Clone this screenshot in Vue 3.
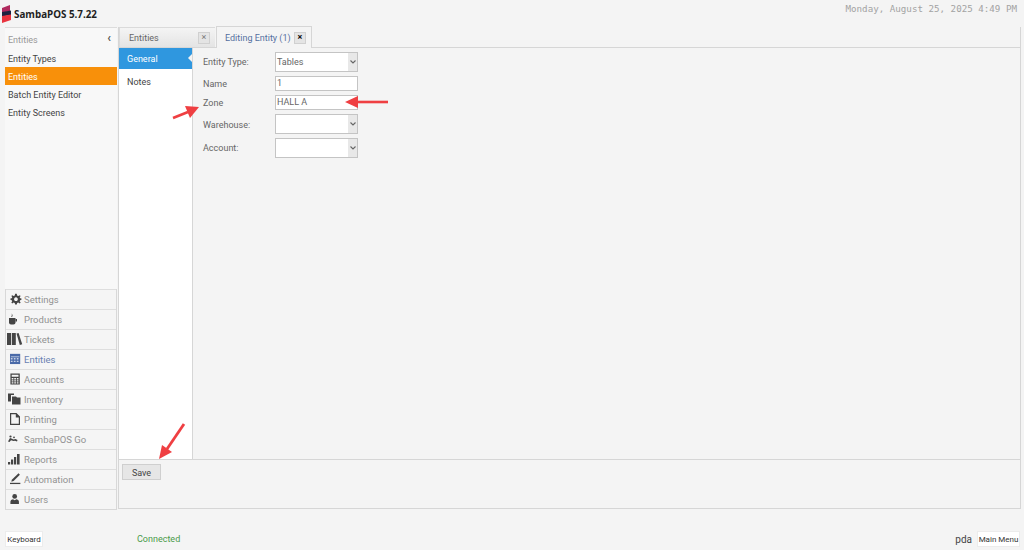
<script setup>
const navItems = [
  { label: 'Settings', icon: 'gear' },
  { label: 'Products', icon: 'cup' },
  { label: 'Tickets', icon: 'books' },
  { label: 'Entities', icon: 'table', active: true },
  { label: 'Accounts', icon: 'calc' },
  { label: 'Inventory', icon: 'folder' },
  { label: 'Printing', icon: 'doc' },
  { label: 'SambaPOS Go', icon: 'go' },
  { label: 'Reports', icon: 'bars' },
  { label: 'Automation', icon: 'pen' },
  { label: 'Users', icon: 'user' }
]
const subItems = [
  { label: 'Entity Types' },
  { label: 'Entities', active: true },
  { label: 'Batch Entity Editor' },
  { label: 'Entity Screens' }
]
</script>

<template>
  <div class="page">
    <header class="top">
      <div class="brand">
        <svg class="logo" width="10" height="18" viewBox="0 0 10 18">
          <path d="M0 3 L8 0 L8 6 L0 8 Z" fill="#b02a5e" />
          <path d="M0 7 L9 5.5 L9 10 L0 11.5 Z" fill="#1c2340" />
          <path d="M0 11 L9 9.5 L9 15 L0 18 Z" fill="#e8343f" />
        </svg>
        <span>SambaPOS 5.7.22</span>
      </div>
      <div class="clock">Monday, August 25, 2025 4:49 PM</div>
    </header>

    <div class="body">
      <aside class="side">
        <div class="subnav">
          <div class="subhead"><span>Entities</span><span class="chev">‹</span></div>
          <div v-for="s in subItems" :key="s.label" class="subitem" :class="{ on: s.active }">{{ s.label }}</div>
        </div>
        <nav class="nav">
          <div v-for="n in navItems" :key="n.label" class="navitem" :class="{ on: n.active }">
            <svg class="ico" width="14" height="14" viewBox="0 0 14 14" fill="#444">
              <g v-if="n.icon === 'gear'" transform="translate(1 1) scale(.85)">
                <path d="M6 1 L8 1 L8.400 3 L9.800 3.600 L11.500 2.500 L12.500 3.500 L11.400 5 L12 6.300 L13.500 6.600 L13.500 8 L12 8.400 L11.400 9.700 L12.500 11.300 L11.500 12.300 L9.800 11.200 L8.400 11.800 L8 13.500 L6 13.500 L5.600 11.800 L4.200 11.200 L2.600 12.300 L1.600 11.300 L2.600 9.700 L2 8.400 L0.500 8 L0.500 6.600 L2 6.300 L2.600 5 L1.600 3.500 L2.600 2.500 L4.200 3.600 L5.600 3 Z M7 5.100 A2.200 2.200 0 1 0 7.010 5.100 Z" fill-rule="evenodd" />
              </g>
              <g v-else-if="n.icon === 'cup'">
                <path d="M0 6 H6.500 V10.500 Q6.500 12.500 4.500 12.500 H2 Q0 12.500 0 10.500 Z" />
                <path d="M6.500 7 H8 V9.500 H6.500 Z" />
                <path d="M2.800 1.500 Q4.300 3 3.100 5 L2.300 5 Q3.100 3 2.800 1.500 Z" />
              </g>
              <g v-else-if="n.icon === 'books'">
                <rect x="-2" y="1" width="4" height="12" />
                <rect x="2.800" y="1" width="4" height="12" />
                <path d="M7.500 1.500 L9.600 1 L13.200 12.200 L10.800 13 Z" />
              </g>
              <g v-else-if="n.icon === 'table'" transform="translate(1 1) scale(.85)">
                <rect x="0" y="1" width="12" height="12" fill="#4a6aa8" />
                <rect x="1" y="4" width="10" height="1" fill="#c8d2e6" />
                <path d="M1 6h2v1.500H1zM4.500 6h2v1.500H4.500zM8 6h2v1.500H8zM1 9h2v1.500H1zM4.500 9h2v1.500H4.500zM8 9h2v1.500H8z" fill="#c8d2e6" />
              </g>
              <g v-else-if="n.icon === 'calc'" transform="translate(1 1) scale(.85)">
                <path d="M0.500 0.500 H11.500 V13.500 H0.500 Z M2 2 V4.500 H10 V2 Z M2 6 V7.500 H4 V6 Z M5 6 V7.500 H7 V6 Z M8 6 V7.500 H10 V6 Z M2 8.500 V10 H4 V8.500 Z M5 8.500 V10 H7 V8.500 Z M8 8.500 V10 H10 V8.500 Z M2 10.800 V12.300 H4 V10.800 Z M5 10.800 V12.300 H7 V10.800 Z M8 10.800 V12.300 H10 V10.800 Z" fill-rule="evenodd" />
              </g>
              <g v-else-if="n.icon === 'folder'">
                <path d="M-1 1.500 H5 V3 H2 V9.500 H-1 Z" />
                <path d="M3 4.500 H7 L8 5.500 H11.500 V12.500 H3 Z" />
              </g>
              <g v-else-if="n.icon === 'doc'">
                <path d="M1 1 H7.500 L11 4.500 V13 H1 Z M2.200 2.200 V11.800 H9.800 V5.500 H6.800 V2.200 Z" fill-rule="evenodd" />
              </g>
              <g v-else-if="n.icon === 'go'">
                <path d="M-1 9.500 L1 6 L2.500 6.500 L4.500 7.500 L6.500 7 L8.500 8 L8 9.500 L6 8.700 L4.500 9 L2 8.300 L0.500 10 Z" />
                <circle cx="1.500" cy="4.500" r="1.100" />
                <circle cx="5" cy="5.300" r="0.900" />
              </g>
              <g v-else-if="n.icon === 'bars'" transform="translate(-1 0)">
                <rect x="0" y="10" width="2.200" height="2.500" />
                <rect x="3" y="7.500" width="2.200" height="5" />
                <rect x="6" y="5" width="2.200" height="7.500" />
                <rect x="9" y="2" width="2.600" height="10.500" />
              </g>
              <g v-else-if="n.icon === 'pen'" transform="translate(1 0) scale(.9)">
                <path d="M2 8.500 L9.500 1.500 L11 3 L4 10 L1.500 10.800 Z" />
                <rect x="0" y="12" width="11.500" height="1.400" />
              </g>
              <g v-else transform="translate(1 1) scale(.85)">
                <circle cx="5.500" cy="4" r="2.800" />
                <path d="M0.500 13 V10 Q0.500 7.500 3.500 7.300 L5.500 8.500 L7.500 7.300 Q10.500 7.500 10.500 10 V13 Z" />
              </g>
            </svg>
            <span>{{ n.label }}</span>
          </div>
        </nav>
      </aside>

      <main class="panel">
        <div class="tabs">
          <div class="tab">
            <span>Entities</span>
            <span class="close">×</span>
          </div>
          <div class="tab current">
            <span>Editing Entity (1)</span>
            <span class="close dark">×</span>
          </div>
        </div>
        <div class="work">
          <div class="vtabs">
            <div class="vtab on">General</div>
            <div class="vtab">Notes</div>
          </div>
          <form class="form">
            <label>Entity Type:</label>
            <div class="combo"><span>Tables</span><i><svg width="6" height="4" viewBox="0 0 6 4"><path d="M0.500 0.500 L3 3 L5.500 0.500" fill="none" stroke="#666" stroke-width="1.100" /></svg></i></div>
            <label>Name</label>
            <div class="input">1</div>
            <label>Zone</label>
            <div class="input">HALL A</div>
            <label>Warehouse:</label>
            <div class="combo"><span></span><i><svg width="6" height="4" viewBox="0 0 6 4"><path d="M0.500 0.500 L3 3 L5.500 0.500" fill="none" stroke="#666" stroke-width="1.100" /></svg></i></div>
            <label>Account:</label>
            <div class="combo"><span></span><i><svg width="6" height="4" viewBox="0 0 6 4"><path d="M0.500 0.500 L3 3 L5.500 0.500" fill="none" stroke="#666" stroke-width="1.100" /></svg></i></div>
          </form>
        </div>
        <div class="actions">
          <button type="button" class="save">Save</button>
        </div>
      </main>
    </div>

    <footer class="foot">
      <button type="button" class="flat kb">Keyboard</button>
      <span class="status">Connected</span>
      <span class="user">pda</span>
      <button type="button" class="flat menu">Main Menu</button>
    </footer>

    <svg class="arrows" width="1024" height="550" viewBox="0 0 1024 550">
      <g fill="#ef3f42" stroke="#ef3f42">
        <path d="M173 118 L188 112" stroke-width="2.600" fill="none" />
        <path d="M199 107 L185 106 L190 118 Z" stroke="none" />
        <path d="M388 102 L356 102" stroke-width="2.600" fill="none" />
        <path d="M345 102 L358 96 L358 108 Z" stroke="none" />
        <path d="M184 424 L167 449" stroke-width="2.800" fill="none" />
        <path d="M159 459 L162 445 L172 452 Z" stroke="none" />
      </g>
    </svg>
  </div>
</template>

<style>
html, body { margin: 0; padding: 0; background: #f4f4f4; }
</style>

<style scoped>
.page {
  position: relative;
  width: 1024px;
  height: 550px;
  overflow: hidden;
  background: #f4f4f4;
  font-family: Roboto, "Open Sans", sans-serif;
  font-size: 9px;
  color: #3a3a3a;
  display: flex;
  flex-direction: column;
}
.top {
  height: 27px;
  flex: none;
  display: flex;
  justify-content: space-between;
  align-items: flex-start;
}
.brand {
  display: flex;
  align-items: flex-start;
  padding: 5px 0 0 2px;
  gap: 2px;
  font-family: "Open Sans", sans-serif;
  font-size: 9.8px;
  font-weight: 700;
  color: #1f1f1f;
}
.brand span { margin-top: 3px; line-height: 14px; }
.clock {
  font-family: "DejaVu Sans Mono", monospace;
  font-size: 9.2px;
  color: #a3a3a3;
  padding: 3px 7px 0 0;
  line-height: 12px;
}
.body {
  height: 482px;
  flex: none;
  display: flex;
  padding-left: 5px;
  gap: 1px;
}
.side {
  width: 112px;
  flex: none;
  display: flex;
  flex-direction: column;
}
.subnav {
  height: 262px;
  flex: none;
  background: #f8f8f8;
  border-top: 1px solid #dcdcdc;
  box-sizing: border-box;
}
.subhead {
  display: flex;
  justify-content: space-between;
  height: 21px;
  line-height: 24px;
  padding: 0 6px 0 3px;
  color: #999;
}
.chev { font-size: 12px; color: #555; font-weight: 700; line-height: 20px; }
.subitem {
  height: 18px;
  line-height: 20px;
  padding-left: 3px;
  color: #444;
}
.subitem.on { background: #f8900a; color: #fff; }
.nav {
  flex: 1;
  border: 1px solid #d8d8d8;
  border-top: none;
  box-sizing: border-box;
}
.navitem {
  height: 20px;
  box-sizing: border-box;
  border-top: 1px solid #dedede;
  display: flex;
  align-items: center;
  gap: 1px;
  padding: 0 0 1px 3px;
  color: #929292;
  font-size: 9.5px;
  background: #f5f5f5;
}
.navitem.on { color: #6a82b2; }
.ico { flex: none; overflow: visible; }
.panel {
  width: 903px;
  flex: none;
  box-sizing: border-box;
  display: flex;
  flex-direction: column;
  border-right: 1px solid #d6d6d6;
  border-bottom: 1px solid #d6d6d6;
  border-left: 1px solid #d6d6d6;
}
.tabs {
  height: 21px;
  box-sizing: border-box;
  flex: none;
  display: flex;
  align-items: flex-end;
  border-bottom: 1px solid #d6d6d6;
}
.tab {
  height: 20px;
  box-sizing: border-box;
  width: 96px;
  display: flex;
  justify-content: space-between;
  align-items: center;
  padding: 1px 5px 0 9px;
  background: linear-gradient(#f4f4f4, #e4e4e4);
  border-top: 1px solid #dadada;
  border-left: 1px solid #dadada;
  color: #666;
}
.tab.current {
  width: 96px;
  height: 22px;
  margin-bottom: -1px;
  margin-left: 1px;
  background: #f4f4f4;
  color: #55709f;
  border: 1px solid #d6d6d6;
  border-bottom: none;
  padding: 1px 5px 0 8px;
}
.close {
  width: 10px;
  height: 10px;
  line-height: 9px;
  text-align: center;
  background: #e4e4e4;
  border: 1px solid #d0d0d0;
  color: #777;
  font-size: 9px;
}
.close.dark { color: #111; font-weight: 700; }
.work {
  flex: 1;
  display: flex;
  min-height: 0;
}
.vtabs {
  width: 73px;
  flex: none;
  background: #fff;
  border-right: 1px solid #d6d6d6;
}
.vtab {
  height: 21px;
  line-height: 22px;
  padding-left: 8px;
  margin-bottom: 2px;
  color: #444;
  position: relative;
}
.vtab.on {
  background: #2f97df;
  color: #fff;
}
.vtab.on::after {
  content: "";
  position: absolute;
  right: 0;
  top: 6px;
  border: 4px solid transparent;
  border-right-color: #f4f4f4;
  border-left: none;
}
.form {
  display: grid;
  grid-template-columns: 72px 83px;
  grid-auto-rows: min-content;
  align-items: center;
  padding: 3px 0 0 10px;
  color: #666;
  row-gap: 3px;
}
.form label { padding-top: 2px; }
.form label:first-child, .form label:last-of-type { padding-top: 0; }
.input, .combo {
  box-sizing: border-box;
  background: #fff;
  border: 1px solid #c4c4c4;
  color: #666;
  margin-top: 1px;
}
.input { height: 15px; padding-left: 1px; line-height: 13px; }
.combo {
  height: 20px;
  display: flex;
  justify-content: space-between;
  align-items: center;
  padding-left: 1px;
  line-height: 18px;
}
.combo i {
  width: 9px;
  height: 18px;
  background: #e8e8e8;
  display: flex;
  align-items: center;
  justify-content: center;
}
.actions {
  height: 49px;
  flex: none;
  border-top: 1px solid #d6d6d6;
  padding: 4px 0 0 3px;
  box-sizing: border-box;
}
.save {
  width: 39px;
  height: 16px;
  padding: 1px 0 0;
  font: inherit;
  color: #444;
  background: #e6e6e6;
  border: 1px solid #cfcfcf;
  display: block;
}
.foot {
  flex: 1;
  display: flex;
  align-items: center;
  padding: 19px 4px 0 5px;
}
.flat {
  height: 16px;
  padding: 0;
  font: inherit;
  font-size: 8px;
  background: #fff;
  border: 1px solid #ececec;
  color: #333;
}
.kb { width: 38px; }
.menu { width: 43px; }
.status { color: #4a9a4a; margin-left: 94px; flex: 1; font-size: 9px; }
.user { margin-right: 5px; color: #444; font-size: 10px; }
.arrows {
  position: absolute;
  left: 0;
  top: 0;
  pointer-events: none;
}
</style>
